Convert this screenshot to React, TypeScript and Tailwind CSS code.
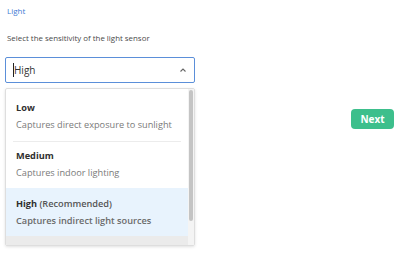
import React from 'react';

const options = [
  { title: 'Low', note: '', desc: 'Captures direct exposure to sunlight' },
  { title: 'Medium', note: '', desc: 'Captures indoor lighting' },
  { title: 'High', note: ' (Recommended)', desc: 'Captures indirect light sources' },
];

export default function App() {
  const selected = 2;

  return (
    <div
      className="w-[398px] h-[253px] bg-white flex overflow-hidden"
      style={{ fontFamily: '"Open Sans", "Noto Sans", sans-serif' }}
    >
      {/* Form column */}
      <div className="w-[200px] pl-[4px] flex flex-col">
        <div className="ml-[3px] mt-[5px] text-[8px] leading-[12px] text-[#3f7bd4]">Light</div>
        <div className="ml-[3px] mt-[15px] text-[7.9px] leading-[12px] text-[#4a4a4a]">
          Select the sensitivity of the light sensor
        </div>

        {/* Select input */}
        <div className="ml-[1px] mt-[13px] w-[190px] h-[26px] border border-[#5b8fd9] rounded-[2px] flex items-center pl-[7px] pr-[7px]">
          <span className="w-px h-[14px] bg-[#222]" />
          <span className="text-[10px] text-[#333] leading-none">High</span>
          <svg className="ml-auto" width="8" height="6" viewBox="0 0 8 6">
            <path d="M1.5 4.5 L4 2 L6.5 4.5" fill="none" stroke="#666" strokeWidth="1.1" />
          </svg>
        </div>

        {/* Menu */}
        <div className="ml-[1px] mt-[5px] w-[190px] h-[158px] border border-[#dedede] rounded-[2px] shadow-[0_1px_3px_rgba(0,0,0,0.12)] flex overflow-hidden">
          <div className="flex-1 flex flex-col pt-[3px]">
            {options.map((o, i) => (
              <div
                key={o.title}
                className={`h-[48px] shrink-0 px-[10px] pt-[10px] ${i === selected ? 'bg-[#e8f3fd]' : ''}`}
              >
                <div className="text-[9.2px] leading-[12px] text-[#2f2f2f]">
                  <span className="font-bold">{o.title}</span>
                  <span className="font-semibold text-[#555]">{o.note}</span>
                </div>
                <div
                  className={`mt-[5px] text-[9.2px] leading-[12px] ${i === selected ? 'text-[#6a6a6a] font-semibold' : 'text-[#7a7a7a]'}`}
                >
                  {o.desc}
                </div>
                {i === 0 && <div className="mt-[10px] -mx-[3px] border-b border-[#ececec]" />}
              </div>
            ))}
            <div className="flex-1 bg-[#ebebeb]" />
          </div>
          {/* Scrollbar */}
          <div className="w-[6px] bg-[#f4f4f4] flex flex-col pt-[1px]">
            <div className="mx-auto w-[4px] h-[131px] rounded-[2px] bg-[#c4c4c4]" />
          </div>
        </div>
      </div>

      {/* Action column */}
      <div className="flex-1 flex justify-end items-start pr-[4px] pt-[109px]">
        <button className="w-[43px] h-[20px] rounded-[4px] bg-[#3dbf8c] text-white text-[10px] font-bold leading-none">
          Next
        </button>
      </div>
    </div>
  );
}
